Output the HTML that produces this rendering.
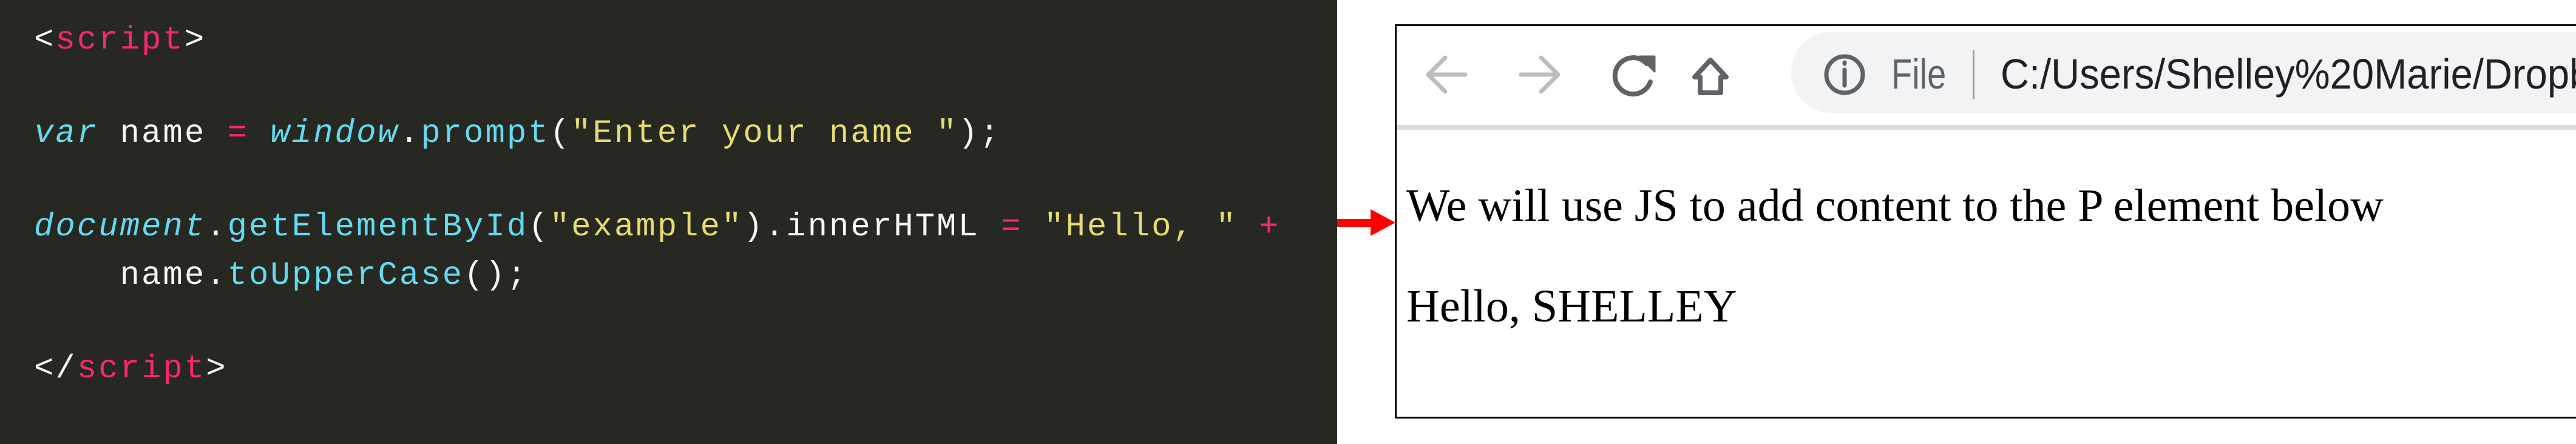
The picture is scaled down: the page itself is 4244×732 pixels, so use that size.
<!DOCTYPE html>
<html><head><meta charset="utf-8"><style>
html,body{margin:0;padding:0;width:4244px;height:732px;overflow:hidden;background:#fff;position:relative}
#code{position:absolute;left:0;top:0;width:2203px;height:732px;background:#272822}
.ln{position:absolute;left:56px;font-family:"Liberation Mono",monospace;font-size:54px;letter-spacing:3px;white-space:pre;color:#f8f8f2;line-height:1}
.p{color:#f92672}.c{color:#66d9ef}.i{color:#66d9ef;font-style:italic}.y{color:#e6db74}
#frame{position:absolute;left:2298px;top:40px;width:1950px;height:650px;border:3px solid #000;border-right:none;box-sizing:border-box;overflow:hidden;background:#fff}
#pill{position:absolute;left:650px;top:9px;width:1400px;height:135px;background:#f1f3f4;border-radius:68px}
#bar{position:absolute;left:0;top:163px;width:100%;height:8px;background:#dadce0}
.t{position:absolute;font-family:"Liberation Sans",sans-serif;font-size:66px;line-height:1;white-space:nowrap;transform:scaleX(0.82);transform-origin:left}
.s{position:absolute;left:16px;font-family:"Liberation Serif",serif;font-size:76px;line-height:1;white-space:nowrap;color:#000}
</style></head><body>
<div id="code">
<div class="ln" style="top:40px">&lt;<span class="p">script</span>&gt;</div>
<div class="ln" style="top:194px"><span class="i">var</span> name <span class="p">=</span> <span class="i">window</span>.<span class="c">prompt</span>(<span class="y">"Enter your name "</span>);</div>
<div class="ln" style="top:348px"><span class="i">document</span>.<span class="c">getElementById</span>(<span class="y">"example"</span>).innerHTML <span class="p">=</span> <span class="y">"Hello, "</span> <span class="p">+</span></div>
<div class="ln" style="top:428px">    name.<span class="c">toUpperCase</span>();</div>
<div class="ln" style="top:582px">&lt;/<span class="p">script</span>&gt;</div>
</div>
<svg style="position:absolute;left:2203px;top:345px" width="96" height="45"><rect x="0" y="16" width="60" height="13" fill="#f00"/><polygon points="55,0 96,22 55,44" fill="#f00"/></svg>
<div id="frame">
<div id="pill"></div>
<div id="bar"></div>
<svg style="position:absolute;left:0;top:0" width="800" height="160" fill="none" stroke-linecap="round" stroke-linejoin="round">
<g stroke="#bdbdbd" stroke-width="7"><path d="M52 80 H113 M80 52 L52 80 L80 108"/><path d="M205 80 H266 M238 52 L266 80 L238 108"/></g>
<g stroke="#5f6368" stroke-width="8"><path d="M412 62 A30 30 0 1 0 418 92"/><polygon points="400,50 425,50 425,75" fill="#5f6368" stroke-width="3"/>
<path d="M517 56 L543 84 H534 V110 H500 V84 H491 Z"/></g>
<circle cx="738" cy="80" r="30" stroke="#5f6368" stroke-width="7"/><path d="M738 72 V98 M738 60 V62" stroke="#5f6368" stroke-width="7"/>
</svg>
<div class="t" style="left:815px;top:44px;font-size:70px;transform:scaleX(0.8);color:#5f6368">File</div>
<div style="position:absolute;left:949px;top:40px;width:3px;height:80px;background:#9aa0a6"></div>
<div class="t" style="left:995px;top:44px;font-size:70px;transform:scaleX(0.93);color:#202124">C:/Users/Shelley%20Marie/Dropbox</div>
<div class="s" style="top:258px">We will use JS to add content to the P element below</div>
<div class="s" style="top:424px">Hello, SHELLEY</div>
</div>
</body></html>
